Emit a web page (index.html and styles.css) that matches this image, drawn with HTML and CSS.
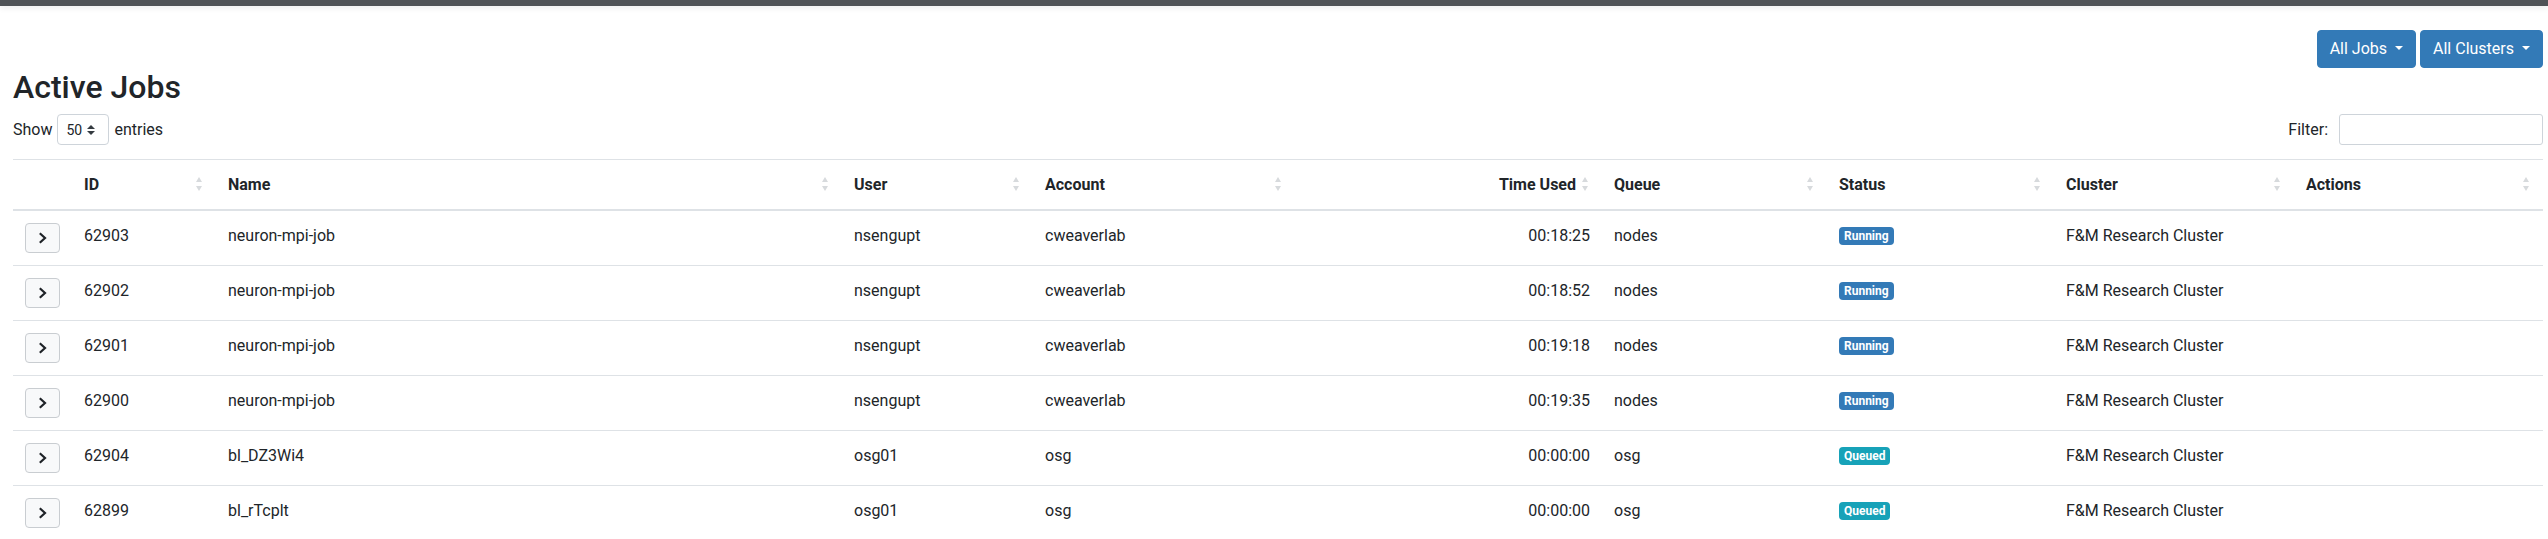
FILE: index.html
```html
<!DOCTYPE html>
<html lang="en">
<head>
    <meta charset="UTF-8">
    <meta name="viewport" content="width=device-width, initial-scale=1.0">
    <title>Active Jobs</title>
    <link rel="stylesheet" href="styles.css">
</head>
<body>

    <div class="topbar"></div>

    <div class="page">
        <div class="toolbar">
            <button class="btn dropdown">All Jobs</button>
            <button class="btn dropdown">All Clusters</button>
        </div>

        <h2 class="title">Active Jobs</h2>

        <div class="table-controls">
            <label class="length">
                Show
                <span class="select">50
                    <svg width="8" height="10" viewBox="0 0 4 5"><path fill="#343a40" d="M2 0L0 2h4zm0 5L0 3h4z"/></svg>
                </span>
                entries
            </label>
            <label class="filter">
                Filter:
                <input type="search">
            </label>
        </div>

        <table class="jobs">
            <colgroup>
                <col class="c-exp"><col class="c-id"><col class="c-name"><col class="c-user"><col class="c-account">
                <col class="c-time"><col class="c-queue"><col class="c-status"><col class="c-cluster"><col class="c-actions">
            </colgroup>
            <thead>
                <tr>
                    <th></th>
                    <th class="sorting">ID</th>
                    <th class="sorting">Name</th>
                    <th class="sorting">User</th>
                    <th class="sorting">Account</th>
                    <th class="sorting num">Time Used</th>
                    <th class="sorting">Queue</th>
                    <th class="sorting">Status</th>
                    <th class="sorting">Cluster</th>
                    <th class="sorting">Actions</th>
                </tr>
            </thead>
            <tbody>
                <tr>
                    <td><button class="expand"><svg width="9" height="12" viewBox="0 0 9 12"><polyline points="1.8,1.3 7,6 1.8,10.7" fill="none" stroke="#1f2328" stroke-width="2.2"/></svg></button></td>
                    <td>62903</td><td>neuron-mpi-job</td><td>nsengupt</td><td>cweaverlab</td>
                    <td class="num">00:18:25</td><td>nodes</td><td><span class="badge running">Running</span></td>
                    <td>F&amp;M Research Cluster</td><td></td>
                </tr>
                <tr>
                    <td><button class="expand"><svg width="9" height="12" viewBox="0 0 9 12"><polyline points="1.8,1.3 7,6 1.8,10.7" fill="none" stroke="#1f2328" stroke-width="2.2"/></svg></button></td>
                    <td>62902</td><td>neuron-mpi-job</td><td>nsengupt</td><td>cweaverlab</td>
                    <td class="num">00:18:52</td><td>nodes</td><td><span class="badge running">Running</span></td>
                    <td>F&amp;M Research Cluster</td><td></td>
                </tr>
                <tr>
                    <td><button class="expand"><svg width="9" height="12" viewBox="0 0 9 12"><polyline points="1.8,1.3 7,6 1.8,10.7" fill="none" stroke="#1f2328" stroke-width="2.2"/></svg></button></td>
                    <td>62901</td><td>neuron-mpi-job</td><td>nsengupt</td><td>cweaverlab</td>
                    <td class="num">00:19:18</td><td>nodes</td><td><span class="badge running">Running</span></td>
                    <td>F&amp;M Research Cluster</td><td></td>
                </tr>
                <tr>
                    <td><button class="expand"><svg width="9" height="12" viewBox="0 0 9 12"><polyline points="1.8,1.3 7,6 1.8,10.7" fill="none" stroke="#1f2328" stroke-width="2.2"/></svg></button></td>
                    <td>62900</td><td>neuron-mpi-job</td><td>nsengupt</td><td>cweaverlab</td>
                    <td class="num">00:19:35</td><td>nodes</td><td><span class="badge running">Running</span></td>
                    <td>F&amp;M Research Cluster</td><td></td>
                </tr>
                <tr>
                    <td><button class="expand"><svg width="9" height="12" viewBox="0 0 9 12"><polyline points="1.8,1.3 7,6 1.8,10.7" fill="none" stroke="#1f2328" stroke-width="2.2"/></svg></button></td>
                    <td>62904</td><td>bl_DZ3Wi4</td><td>osg01</td><td>osg</td>
                    <td class="num">00:00:00</td><td>osg</td><td><span class="badge queued">Queued</span></td>
                    <td>F&amp;M Research Cluster</td><td></td>
                </tr>
                <tr>
                    <td><button class="expand"><svg width="9" height="12" viewBox="0 0 9 12"><polyline points="1.8,1.3 7,6 1.8,10.7" fill="none" stroke="#1f2328" stroke-width="2.2"/></svg></button></td>
                    <td>62899</td><td>bl_rTcplt</td><td>osg01</td><td>osg</td>
                    <td class="num">00:00:00</td><td>osg</td><td><span class="badge queued">Queued</span></td>
                    <td>F&amp;M Research Cluster</td><td></td>
                </tr>
            </tbody>
        </table>
    </div>

</body>
</html>
```

FILE: styles.css
```css
body {
    font-family: Roboto, 'Liberation Sans', sans-serif;
    font-size: 16px;
    line-height: 24px;
    color: #212529;
    background-color: #fff;
    margin: 0;
}
.topbar {
    height: 6px;
    background-color: #505357;
    box-shadow: 0 2px 6px rgba(0, 0, 0, 0.08);
}
.page {
    padding: 24px 5px 0 13px;
}
.toolbar {
    display: flex;
    justify-content: flex-end;
    gap: 4px;
}
.btn {
    font-family: inherit;
    font-size: 16px;
    line-height: 24px;
    padding: 6px 12px;
    border: 1px solid #337ab7;
    border-radius: 4px;
    background-color: #337ab7;
    color: #fff;
    cursor: pointer;
}
.dropdown::after {
    content: '';
    display: inline-block;
    margin-left: 8px;
    vertical-align: 4px;
    border-top: 4px solid #fff;
    border-left: 4px solid transparent;
    border-right: 4px solid transparent;
}
.title {
    margin: 0 0 8px;
    font-size: 32px;
    font-weight: 500;
    line-height: 1.2;
}
.table-controls {
    display: flex;
    justify-content: space-between;
    align-items: center;
}
.length, .filter {
    display: flex;
    align-items: center;
}
.length {
    gap: 5px;
}
.filter {
    gap: 11px;
}
.select {
    display: flex;
    align-items: center;
    justify-content: space-between;
    box-sizing: border-box;
    width: 52px;
    height: 31px;
    padding: 0 13px 0 8px;
    border: 1px solid #ced4da;
    border-radius: 4px;
    font-size: 14px;
}
.filter input {
    box-sizing: border-box;
    width: 204px;
    height: 31px;
    border: 1px solid #ced4da;
    border-radius: 3px;
    padding: 4px 8px;
    font-family: inherit;
    font-size: 14px;
}
.jobs {
    width: 100%;
    table-layout: fixed;
    border-collapse: separate;
    border-spacing: 0;
    margin-top: 14px;
}
.c-exp { width: 59px; }
.c-id { width: 144px; }
.c-name { width: 626px; }
.c-user { width: 191px; }
.c-account { width: 262px; }
.c-time { width: 307px; }
.c-queue { width: 225px; }
.c-status { width: 227px; }
.c-cluster { width: 240px; }
.c-actions { width: 249px; }
.jobs th {
    position: relative;
    text-align: left;
    font-weight: 700;
    line-height: 26px;
    padding: 12px 26px 11px 12px;
    border-top: 1px solid #dee2e6;
    border-bottom: 2px solid #dee2e6;
    white-space: nowrap;
}
.jobs th.sorting::before,
.jobs th.sorting::after {
    content: '';
    position: absolute;
    right: 14px;
    border-left: 3px solid transparent;
    border-right: 3px solid transparent;
}
.jobs th.sorting::before {
    top: 17px;
    border-bottom: 5px solid #d7dadd;
}
.jobs th.sorting::after {
    top: 26px;
    border-top: 5px solid #d7dadd;
}
.jobs td {
    padding: 12px;
    line-height: 26px;
    vertical-align: top;
    border-top: 1px solid #dee2e6;
    white-space: nowrap;
}
.jobs tbody tr:first-child td {
    border-top: none;
}
.jobs th.num, .jobs td.num {
    text-align: right;
}
.expand {
    display: flex;
    align-items: center;
    justify-content: center;
    width: 35px;
    height: 30px;
    padding: 0;
    background-color: #f8f9fa;
    border: 1px solid #c9cdd1;
    border-radius: 4px;
    cursor: pointer;
}
.badge {
    display: inline-block;
    padding: 3px 5px;
    font-size: 12px;
    font-weight: 700;
    line-height: 1;
    vertical-align: 1px;
    color: #fff;
    border-radius: 4px;
}
.running {
    background-color: #337ab7;
}
.queued {
    background-color: #17a2b8;
}
```
